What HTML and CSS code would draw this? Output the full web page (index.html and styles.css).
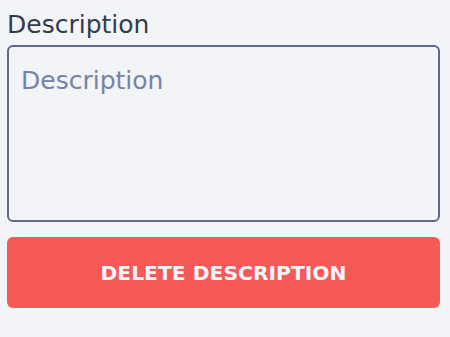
FILE: index.html
```html
<!DOCTYPE html>
<html lang="en">
<head>
    <meta charset="UTF-8">
    <meta name="viewport" content="width=device-width, initial-scale=1.0">
    <title>Description</title>
    <link rel="stylesheet" href="styles.css">
</head>
<body>
    <div class="field">
        <label class="field-label" for="description">Description</label>
        <textarea id="description" class="field-input" placeholder="Description"></textarea>
        <button class="delete-button">Delete Description</button>
    </div>
</body>
</html>
```

FILE: styles.css
```css
body {
    font-family: "DejaVu Sans", Inter, sans-serif;
    background-color: #f3f4f8;
    color: #363b4a;
    margin: 0;
    padding: 0;
}

.field {
    display: flex;
    flex-direction: column;
    padding: 10px 10px 0 7px;
}

.field-label {
    font-size: 25px;
    line-height: 30px;
    margin-bottom: 5px;
}

.field-input {
    box-sizing: border-box;
    height: 177px;
    padding: 19px 12px 15px;
    font-family: inherit;
    font-size: 25px;
    line-height: 30px;
    color: #363b4a;
    background-color: #f3f4f8;
    border: 2px solid #5d6a8e;
    border-radius: 6px;
    resize: none;
    outline: none;
}

.field-input::placeholder {
    color: #7583a6;
}

.delete-button {
    margin-top: 15px;
    height: 71px;
    font-family: inherit;
    font-size: 20.3px;
    font-weight: 700;
    text-transform: uppercase;
    color: #f3f4f8;
    background-color: #f75858;
    border: none;
    border-radius: 6px;
    cursor: pointer;
}
```
